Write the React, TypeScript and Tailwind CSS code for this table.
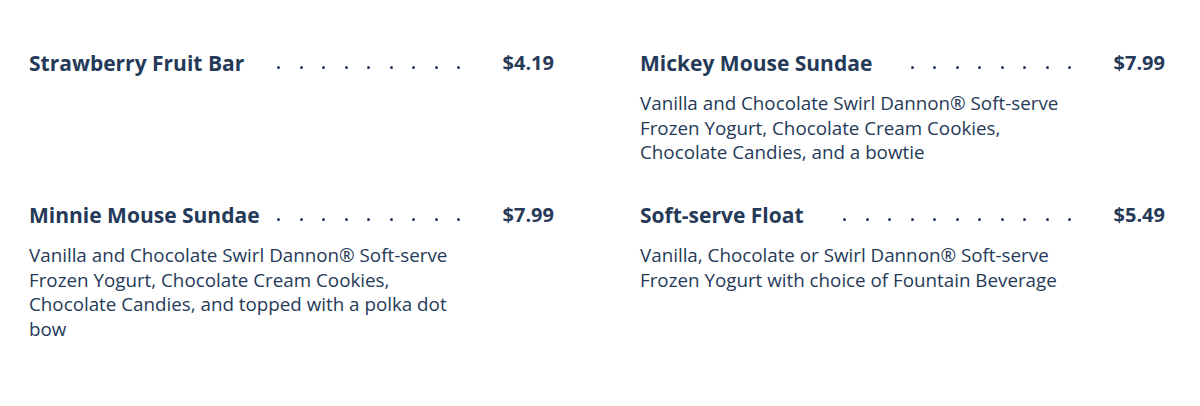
import React from "react";

type Item = { title: string; price: string; dots: number; desc?: string[] };

const items: Item[] = [
  { title: "Strawberry Fruit Bar", price: "$4.19", dots: 9 },
  {
    title: "Mickey Mouse Sundae",
    price: "$7.99",
    dots: 8,
    desc: [
      "Vanilla and Chocolate Swirl Dannon® Soft-serve",
      "Frozen Yogurt, Chocolate Cream Cookies,",
      "Chocolate Candies, and a bowtie",
    ],
  },
  {
    title: "Minnie Mouse Sundae",
    price: "$7.99",
    dots: 9,
    desc: [
      "Vanilla and Chocolate Swirl Dannon® Soft-serve",
      "Frozen Yogurt, Chocolate Cream Cookies,",
      "Chocolate Candies, and topped with a polka dot",
      "bow",
    ],
  },
  {
    title: "Soft-serve Float",
    price: "$5.49",
    dots: 11,
    desc: [
      "Vanilla, Chocolate or Swirl Dannon® Soft-serve",
      "Frozen Yogurt with choice of Fountain Beverage",
    ],
  },
];

function Dots({ count }: { count: number }) {
  return (
    <div className="flex-1 flex justify-end items-center h-[4px] self-center mt-[8px]">
      {Array.from({ length: count }).map((_, i) => (
        <div key={i} className="w-[22.5px] shrink-0 flex justify-center">
          <div className="w-[3px] h-[3px] rounded-full bg-[#253a58]" />
        </div>
      ))}
    </div>
  );
}

function MenuItem({ item }: { item: Item }) {
  return (
    <div>
      <div className="flex items-center">
        <h3 className="text-[21px] font-bold leading-[28px] text-[#253a58] whitespace-nowrap">{item.title}</h3>
        <Dots count={item.dots} />
        <div className="w-[84px] shrink-0 text-right text-[20px] font-bold leading-[28px] text-[#253a58]">
          {item.price}
        </div>
      </div>
      {item.desc && (
        <div className="mt-[14px] text-[18.8px] leading-[24.6px] text-[#253a58]">
          {item.desc.map((l, i) => (
            <div key={i} className="whitespace-nowrap">{l}</div>
          ))}
        </div>
      )}
    </div>
  );
}

export default function App() {
  return (
    <div
      className="w-[1200px] h-[406px] bg-white pl-[29px] pr-[35px] pt-[49px]"
      style={{ fontFamily: "'Open Sans', 'Noto Sans', sans-serif" }}
    >
      <div className="grid grid-cols-2 gap-x-[86px]">
        <div className="h-[152px]">
          <MenuItem item={items[0]} />
        </div>
        <div className="h-[152px]">
          <MenuItem item={items[1]} />
        </div>
        <MenuItem item={items[2]} />
        <MenuItem item={items[3]} />
      </div>
    </div>
  );
}
